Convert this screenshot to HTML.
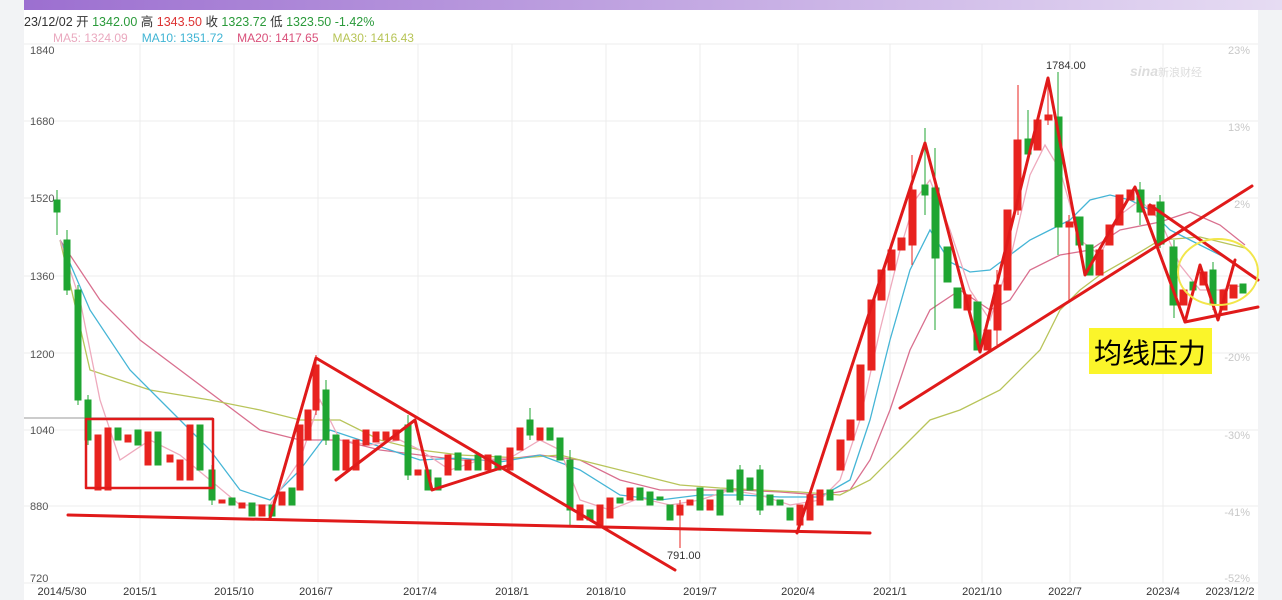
<!DOCTYPE html>
<html><head><meta charset="utf-8"><style>
html,body{margin:0;padding:0;width:1282px;height:600px;overflow:hidden;background:#fff;font-family:"Liberation Sans","Noto Sans CJK SC",sans-serif}
</style></head><body>
<svg width="1282" height="600" viewBox="0 0 1282 600" xmlns="http://www.w3.org/2000/svg" font-family="Liberation Sans, Noto Sans CJK SC, sans-serif">
<defs><linearGradient id="pg" x1="0" x2="1"><stop offset="0" stop-color="#9c6fd0"/><stop offset="1" stop-color="#e6dcf3"/></linearGradient></defs>
<rect x="0" y="0" width="1282" height="600" fill="#fff"/>
<rect x="0" y="0" width="24" height="600" fill="#f2f3f5"/>
<rect x="1258" y="0" width="24" height="600" fill="#f2f3f5"/>
<rect x="24" y="0" width="1258" height="10" fill="url(#pg)"/>
<!-- header -->
<text x="24" y="26" font-size="12.5"><tspan fill="#333">23/12/02 开 </tspan><tspan fill="#2a9a3a">1342.00 </tspan><tspan fill="#333">高 </tspan><tspan fill="#d33">1343.50 </tspan><tspan fill="#333">收 </tspan><tspan fill="#2a9a3a">1323.72 </tspan><tspan fill="#333">低 </tspan><tspan fill="#2a9a3a">1323.50 -1.42%</tspan></text>
<text x="53" y="42" font-size="12"><tspan fill="#eaa9bf">MA5: 1324.09</tspan><tspan dx="14" fill="#3fb4d4">MA10: 1351.72</tspan><tspan dx="14" fill="#d9507a">MA20: 1417.65</tspan><tspan dx="14" fill="#b7c456">MA30: 1416.43</tspan></text>
<!-- grid -->
<g stroke="#ececec" stroke-width="1">
<line x1="24" y1="44" x2="1258" y2="44"/>
<line x1="24" y1="121" x2="1258" y2="121"/>
<line x1="24" y1="198" x2="1258" y2="198"/>
<line x1="24" y1="276" x2="1258" y2="276"/>
<line x1="24" y1="353" x2="1258" y2="353"/>
<line x1="24" y1="430" x2="1258" y2="430"/>
<line x1="24" y1="506" x2="1258" y2="506"/>
<line x1="24" y1="583" x2="1258" y2="583"/>
<line x1="140" y1="44" x2="140" y2="583"/><line x1="234" y1="44" x2="234" y2="583"/><line x1="318" y1="44" x2="318" y2="583"/><line x1="418" y1="44" x2="418" y2="583"/><line x1="512" y1="44" x2="512" y2="583"/><line x1="606" y1="44" x2="606" y2="583"/><line x1="700" y1="44" x2="700" y2="583"/><line x1="798" y1="44" x2="798" y2="583"/><line x1="890" y1="44" x2="890" y2="583"/><line x1="982" y1="44" x2="982" y2="583"/><line x1="1070" y1="44" x2="1070" y2="583"/><line x1="1163" y1="44" x2="1163" y2="583"/>
</g>
<line x1="24" y1="418" x2="213" y2="418" stroke="#ccc" stroke-width="2"/>
<g font-size="11" fill="#555">
<text x="30" y="54">1840</text><text x="30" y="125">1680</text><text x="30" y="202">1520</text><text x="30" y="280">1360</text><text x="30" y="358">1200</text><text x="30" y="434">1040</text><text x="30" y="510">880</text><text x="30" y="582">720</text>
</g>
<g font-size="11" fill="#c8c8c8" text-anchor="end">
<text x="1250" y="54">23%</text><text x="1250" y="131">13%</text><text x="1250" y="208">2%</text><text x="1250" y="361">-20%</text><text x="1250" y="439">-30%</text><text x="1250" y="516">-41%</text><text x="1250" y="582">-52%</text>
</g>
<g font-size="11" fill="#333" text-anchor="middle">
<text x="62" y="595">2014/5/30</text><text x="140" y="595">2015/1</text><text x="234" y="595">2015/10</text><text x="316" y="595">2016/7</text><text x="420" y="595">2017/4</text><text x="512" y="595">2018/1</text><text x="606" y="595">2018/10</text><text x="700" y="595">2019/7</text><text x="798" y="595">2020/4</text><text x="890" y="595">2021/1</text><text x="982" y="595">2021/10</text><text x="1065" y="595">2022/7</text><text x="1163" y="595">2023/4</text><text x="1230" y="595">2023/12/2</text>
</g>
<text x="1130" y="76" font-size="14" font-style="italic" fill="#ddd" font-weight="bold">sina</text><text x="1158" y="76" font-size="11" fill="#ddd">新浪财经</text>
<!-- MA lines -->
<g fill="none" stroke-width="1.3">
<polyline stroke="#d9708f" points="60,240 100,300 140,340 180,370 220,400 260,430 300,440 340,440 380,450 420,455 460,460 500,460 540,455 580,460 620,480 660,490 700,490 740,490 780,492 820,495 850,490 870,460 890,410 910,350 930,310 960,290 990,310 1010,300 1030,270 1060,255 1090,250 1120,230 1160,222 1190,212 1220,225 1245,245"/>
<polyline stroke="#b8c45a" points="60,240 90,370 150,390 210,400 260,410 300,420 340,420 380,440 420,450 460,455 520,458 560,455 600,465 640,475 680,485 720,488 760,490 800,492 840,495 870,480 900,450 930,420 960,410 1000,390 1040,350 1060,310 1080,290 1100,275 1130,258 1160,240 1200,237 1245,248"/>
<polyline stroke="#45b5d6" points="60,240 90,310 130,370 170,410 210,450 240,490 270,500 300,470 330,430 360,440 390,450 420,460 460,458 500,462 540,455 580,470 620,495 660,500 700,495 740,495 780,497 820,497 850,480 870,420 890,340 910,270 930,230 950,262 970,272 990,270 1010,255 1030,240 1050,230 1070,220 1090,200 1110,195 1130,200 1150,210 1170,230 1200,245 1230,260 1245,270"/>
<polyline stroke="#eeaabd" points="60,240 80,300 100,400 120,460 150,440 180,455 210,480 240,505 270,505 300,460 320,400 340,440 370,445 400,440 420,450 450,470 480,460 510,458 540,440 560,450 580,500 610,510 640,498 670,505 700,500 730,490 760,495 790,505 820,500 840,480 860,420 880,330 900,250 915,200 930,180 950,230 970,290 990,320 1010,260 1030,175 1045,145 1060,170 1080,240 1100,255 1120,215 1140,200 1160,220 1180,265 1200,290 1220,290 1245,285"/>
</g>
<!-- candles -->
<g stroke-width="1">
<g fill="#1fa532" stroke="#1fa532">
<line x1="57" y1="190" x2="57" y2="235"/><rect x="54" y="200" width="6" height="12"/>
<line x1="67" y1="230" x2="67" y2="295"/><rect x="64" y="240" width="6" height="50"/>
<line x1="78" y1="285" x2="78" y2="405"/><rect x="75" y="290" width="6" height="110"/>
<line x1="88" y1="395" x2="88" y2="445"/><rect x="85" y="400" width="6" height="40"/>
<rect x="115" y="428" width="6" height="12"/><rect x="135" y="430" width="6" height="15"/><rect x="155" y="432" width="6" height="33"/>
<rect x="197" y="425" width="6" height="45"/><line x1="212" y1="465" x2="212" y2="505"/><rect x="209" y="470" width="6" height="30"/>
<rect x="229" y="498" width="6" height="7"/><rect x="249" y="503" width="6" height="13"/><rect x="269" y="505" width="6" height="11"/><rect x="289" y="488" width="6" height="17"/>
<line x1="326" y1="380" x2="326" y2="445"/><rect x="323" y="390" width="6" height="50"/><rect x="333" y="435" width="6" height="35"/>
<line x1="408" y1="415" x2="408" y2="480"/><rect x="405" y="425" width="6" height="50"/><rect x="425" y="470" width="6" height="20"/><rect x="435" y="478" width="6" height="12"/>
<rect x="455" y="453" width="6" height="17"/><rect x="475" y="455" width="6" height="15"/><rect x="495" y="456" width="6" height="14"/>
<line x1="530" y1="408" x2="530" y2="440"/><rect x="527" y="420" width="6" height="15"/><rect x="547" y="428" width="6" height="12"/><rect x="557" y="438" width="6" height="22"/>
<line x1="570" y1="450" x2="570" y2="525"/><rect x="567" y="460" width="6" height="50"/><rect x="587" y="510" width="6" height="10"/>
<rect x="617" y="498" width="6" height="5"/><rect x="637" y="488" width="6" height="12"/><rect x="647" y="492" width="6" height="13"/><rect x="657" y="497" width="6" height="3"/><rect x="667" y="505" width="6" height="15"/>
<rect x="697" y="488" width="6" height="22"/><rect x="717" y="490" width="6" height="25"/><rect x="727" y="480" width="6" height="12"/><line x1="740" y1="465" x2="740" y2="505"/><rect x="737" y="470" width="6" height="30"/><rect x="747" y="478" width="6" height="12"/><line x1="760" y1="465" x2="760" y2="515"/><rect x="757" y="470" width="6" height="40"/><rect x="767" y="495" width="6" height="10"/><rect x="777" y="500" width="6" height="5"/><rect x="787" y="508" width="6" height="12"/><rect x="827" y="490" width="6" height="10"/>
<line x1="925" y1="128" x2="925" y2="215"/><rect x="922" y="185" width="6" height="10"/>
<line x1="935" y1="148" x2="935" y2="330"/><rect x="932" y="188" width="7" height="70"/><rect x="944" y="247" width="7" height="35"/><rect x="954" y="288" width="7" height="20"/><rect x="974" y="302" width="7" height="48"/>
<line x1="1028" y1="110" x2="1028" y2="160"/><rect x="1025" y="139" width="6" height="15"/>
<line x1="1058" y1="72" x2="1058" y2="255"/><rect x="1055" y="117" width="7" height="110"/><rect x="1076" y="217" width="7" height="28"/><rect x="1086" y="245" width="7" height="30"/>
<line x1="1140" y1="182" x2="1140" y2="225"/><rect x="1137" y="190" width="7" height="22"/><line x1="1160" y1="195" x2="1160" y2="248"/><rect x="1157" y="202" width="7" height="42"/>
<line x1="1174" y1="240" x2="1174" y2="318"/><rect x="1170" y="247" width="7" height="58"/><rect x="1190" y="282" width="6" height="8"/><line x1="1213" y1="262" x2="1213" y2="310"/><rect x="1210" y="270" width="6" height="35"/><rect x="1240" y="284" width="6" height="9"/>
</g>
<g fill="#e8231f" stroke="#e8231f">
<rect x="95" y="435" width="6" height="55"/><rect x="105" y="428" width="6" height="62"/><rect x="125" y="435" width="6" height="7"/><rect x="145" y="432" width="6" height="33"/><rect x="167" y="455" width="6" height="7"/><rect x="177" y="460" width="6" height="20"/><rect x="187" y="425" width="6" height="55"/>
<rect x="219" y="500" width="6" height="3"/><rect x="239" y="503" width="6" height="5"/><rect x="259" y="505" width="6" height="11"/><rect x="279" y="492" width="6" height="13"/>
<rect x="297" y="425" width="6" height="65"/><rect x="305" y="410" width="6" height="30"/><line x1="316" y1="355" x2="316" y2="415"/><rect x="313" y="365" width="6" height="45"/>
<rect x="343" y="440" width="6" height="30"/><rect x="353" y="440" width="6" height="30"/><rect x="363" y="430" width="6" height="15"/><rect x="373" y="432" width="6" height="10"/><rect x="383" y="432" width="6" height="8"/><rect x="393" y="430" width="6" height="10"/>
<rect x="415" y="470" width="6" height="5"/><rect x="445" y="455" width="6" height="20"/><rect x="465" y="460" width="6" height="10"/><rect x="485" y="455" width="6" height="15"/><rect x="507" y="448" width="6" height="22"/><rect x="517" y="428" width="6" height="22"/><rect x="537" y="428" width="6" height="12"/>
<rect x="577" y="505" width="6" height="15"/><rect x="597" y="505" width="6" height="20"/><rect x="607" y="498" width="6" height="20"/><rect x="627" y="488" width="6" height="12"/>
<line x1="680" y1="500" x2="680" y2="548"/><rect x="677" y="505" width="6" height="10"/><rect x="687" y="500" width="6" height="5"/><rect x="707" y="500" width="6" height="10"/>
<rect x="797" y="505" width="6" height="20"/><rect x="807" y="495" width="6" height="25"/><rect x="817" y="490" width="6" height="15"/>
<rect x="837" y="440" width="7" height="30"/><rect x="847" y="420" width="7" height="20"/><rect x="857" y="365" width="7" height="55"/><rect x="868" y="300" width="7" height="70"/><rect x="878" y="270" width="7" height="30"/><rect x="888" y="250" width="7" height="20"/><rect x="898" y="238" width="7" height="12"/><line x1="912" y1="155" x2="912" y2="265"/><rect x="909" y="190" width="7" height="55"/>
<rect x="964" y="295" width="7" height="15"/><rect x="984" y="330" width="7" height="20"/><line x1="997" y1="270" x2="997" y2="345"/><rect x="994" y="285" width="7" height="45"/><rect x="1004" y="210" width="7" height="80"/><line x1="1018" y1="85" x2="1018" y2="215"/><rect x="1014" y="140" width="7" height="70"/><rect x="1034" y="120" width="7" height="30"/><line x1="1048" y1="80" x2="1048" y2="125"/><rect x="1045" y="115" width="7" height="5"/>
<line x1="1069" y1="215" x2="1069" y2="300"/><rect x="1066" y="222" width="7" height="5"/><rect x="1096" y="250" width="7" height="25"/><rect x="1106" y="225" width="7" height="20"/><rect x="1116" y="195" width="7" height="30"/><rect x="1127" y="190" width="7" height="10"/><rect x="1148" y="205" width="7" height="10"/>
<rect x="1180" y="290" width="7" height="15"/><rect x="1200" y="272" width="7" height="13"/><rect x="1220" y="290" width="7" height="20"/><rect x="1230" y="285" width="7" height="13"/>
</g>
</g>
<!-- annotations -->
<g fill="none" stroke="#e01a1a" stroke-width="3" stroke-linecap="round" stroke-linejoin="round">
<line x1="68" y1="515" x2="870" y2="533"/>
<rect x="86" y="419" width="127" height="69" stroke-width="2.5"/>
<polyline points="270,518 316,358 675,570"/>
<polyline points="336,480 415,420 432,490 510,465"/>
<polyline points="797,533 925,143 980,352 1048,78 1085,275 1135,187 1185,322 1200,265 1218,320 1235,260"/>
<line x1="900" y1="408" x2="1252" y2="186"/>
<line x1="1150" y1="205" x2="1258" y2="280"/>
<line x1="1185" y1="322" x2="1258" y2="307"/>
</g>
<ellipse cx="1218" cy="272" rx="40" ry="33" fill="none" stroke="#f2e64a" stroke-width="2"/>
<text x="667" y="559" font-size="11" fill="#333">791.00</text>
<text x="1046" y="69" font-size="11" fill="#333">1784.00</text>
<rect x="1089" y="328" width="123" height="46" fill="#fbf52a"/>
<text x="1150" y="363" font-size="28" fill="#000" text-anchor="middle" font-family="Noto Sans CJK SC, sans-serif">均线压力</text>
</svg>
</body></html>
